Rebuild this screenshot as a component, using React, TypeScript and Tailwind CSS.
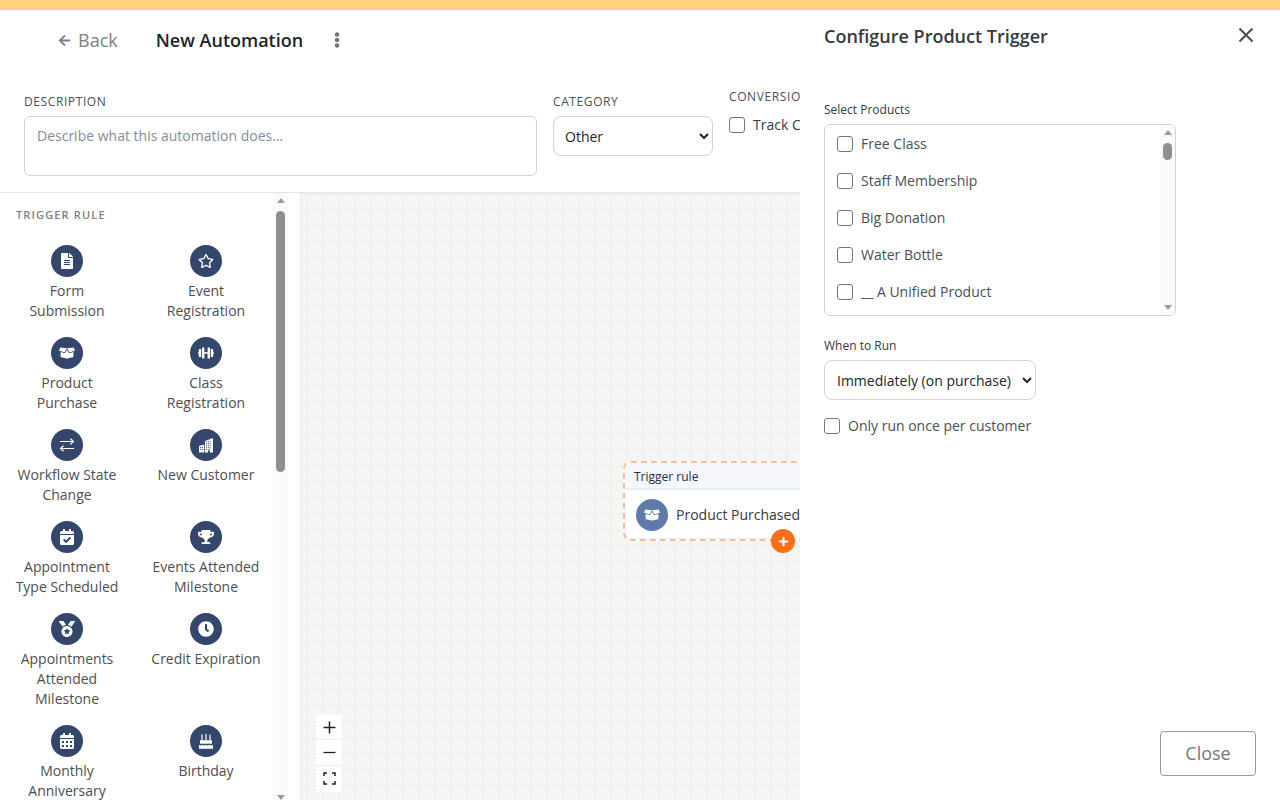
import React from "react";
import {
  FaFileAlt, FaRegStar, FaBoxOpen, FaDumbbell, FaCalendarCheck, FaTrophy, FaMedal, FaClock, FaCalendarAlt, FaPlus, FaArrowLeft, FaEllipsisV,
} from "react-icons/fa";

function ExchangeThin({ className }: { className?: string }) {
  return (
    <svg className={className} viewBox="0 0 16 16" fill="none" stroke="#fff" strokeWidth="1.2">
      <path d="M1 4.5h13.5M11.5 1.8l3 2.7-3 2.7" />
      <path d="M15 11.5H1.5M4.5 8.8l-3 2.7 3 2.7" />
    </svg>
  );
}

function Buildings({ className }: { className?: string }) {
  const towerDots: React.ReactNode[] = [];
  for (let r = 0; r < 5; r++) {
    for (let c = 0; c < 3; c++) {
      towerDots.push(<rect key={`t${r}${c}`} x={8.2 + c * 1.7} y={4.2 + r * 1.9} width="0.9" height="1" fill="#34466b" />);
    }
  }
  const lowDots: React.ReactNode[] = [];
  for (let r = 0; r < 2; r++) {
    for (let c = 0; c < 2; c++) {
      lowDots.push(<rect key={`l${r}${c}`} x={2.2 + c * 1.9} y={10 + r * 2} width="1" height="1" fill="#34466b" />);
    }
  }
  return (
    <svg className={className} viewBox="0 0 16 16">
      <path d="M7 15.5V4L15 1v14.5h-3v-2h-2v2z" fill="#fff" />
      <path d="M1 15.5V9l5.2-1.6v8.1z" fill="#fff" />
      {towerDots}
      {lowDots}
    </svg>
  );
}

function Cake({ className }: { className?: string }) {
  return (
    <svg className={className} viewBox="0 0 16 16" fill="#fff">
      <rect x="3.4" y="1.5" width="1.2" height="6" />
      <rect x="7.4" y="0.8" width="1.2" height="6.7" />
      <rect x="11.4" y="1.5" width="1.2" height="6" />
      <path d="M2 7.2h12v3.1c-1 .9-2 .9-3 0-1 .9-2 .9-3 0-1 .9-2 .9-3 0-1 .9-2 .9-3 0z" />
      <path d="M1 11.8c1.2.9 2.4.9 3.5 0 1.1.9 2.3.9 3.5 0 1.100.9 2.300.9 3.500 0 1.100.9 2.300.9 3.500 0V15.800H1z" />
    </svg>
  );
}

const triggers: { label: string; Icon: React.ComponentType<{ className?: string }> }[] = [
  { label: "Form Submission", Icon: FaFileAlt },
  { label: "Event Registration", Icon: FaRegStar },
  { label: "Product Purchase", Icon: FaBoxOpen },
  { label: "Class Registration", Icon: FaDumbbell },
  { label: "Workflow State Change", Icon: ExchangeThin },
  { label: "New Customer", Icon: Buildings },
  { label: "Appointment Type Scheduled", Icon: FaCalendarCheck },
  { label: "Events Attended Milestone", Icon: FaTrophy },
  { label: "Appointments Attended Milestone", Icon: FaMedal },
  { label: "Credit Expiration", Icon: FaClock },
  { label: "Monthly Anniversary", Icon: FaCalendarAlt },
  { label: "Birthday", Icon: Cake },
];

const products = ["Free Class", "Staff Membership", "Big Donation", "Water Bottle", "__ A Unified Product"];

function Check({ className = "" }: { className?: string }) {
  return <input type="checkbox" className={"appearance-none w-4 h-4 shrink-0 bg-white border border-[#767676] rounded-[3px] " + className} />;
}

function ArrowUp({ w = 8 }: { w?: number }) {
  return <svg width={w} height={5} viewBox="0 0 8 5" className="shrink-0"><path d="M4 0L8 5H0z" fill="#9a9a9a" /></svg>;
}
function ArrowDown({ w = 8 }: { w?: number }) {
  return <svg width={w} height={5} viewBox="0 0 8 5" className="shrink-0"><path d="M0 0H8L4 5z" fill="#9a9a9a" /></svg>;
}

export default function App() {
  return (
    <div className="w-[1280px] h-[800px] overflow-hidden flex flex-col bg-white text-[#495057] font-['Open_Sans',sans-serif]">
      <div className="h-[10px] shrink-0 bg-[#ffd17d]" />
      <div className="flex flex-1 min-h-0">
        <div className="w-[800px] shrink-0 flex flex-col overflow-hidden">
          <div className="h-[60px] shrink-0 flex items-center">
            <div className="ml-[58px] flex items-center text-[18px] text-[#808080]">
              <FaArrowLeft className="w-[13px] h-[13px] mr-[7px]" />
              <span>Back</span>
            </div>
            <div className="ml-[38px] text-[18px] font-[590] text-[#212529]">New Automation</div>
            <FaEllipsisV className="ml-[27px] w-[14px] h-[16px] text-[#6c757d]" />
          </div>
          <div className="h-[123px] shrink-0 border-b border-[#e5e5e5] flex pl-6 w-[900px]">
            <div className="w-[513px] shrink-0 pt-[23px]">
              <div className="text-[12px] leading-[18px] tracking-[0.6px] text-[#495057] mb-[5px]">DESCRIPTION</div>
              <div className="h-[60px] rounded-[6px] border border-[#ced4da] px-3 py-[9px] text-[14px] leading-[20px] text-[#868e96]">
                Describe what this automation does...
              </div>
            </div>
            <div className="ml-4 w-[160px] shrink-0 pt-[23px]">
              <div className="text-[12px] leading-[18px] tracking-[0.6px] text-[#495057] mb-[5px]">CATEGORY</div>
              <select defaultValue="Other" className="w-[160px] h-10 rounded-[8px] border border-[#ced4da] bg-white pl-[7px] pr-1 text-[14px] text-[#212529]">
                <option>Other</option>
              </select>
            </div>
            <div className="ml-4 shrink-0 pt-[18px]">
              <div className="text-[12px] leading-[18px] tracking-[0.6px] text-[#495057] whitespace-nowrap">CONVERSION</div>
              <div className="mt-[9px] flex items-center gap-2 text-[14px] leading-[20px] text-[#343a40] whitespace-nowrap">
                <Check />
                <span>Track Conversion</span>
              </div>
            </div>
          </div>
          <div className="flex-1 min-h-0 flex">
            <div className="w-[273px] shrink-0 overflow-hidden pt-[13px]">
              <div className="pl-4 text-[11px] leading-[18px] font-semibold tracking-[1.15px] text-[#808080]">TRIGGER RULE</div>
              <div className="mt-[21px] grid grid-cols-[110px_110px] gap-x-[29px] gap-y-4 pl-3">
                {triggers.map(({ label, Icon }) => (
                  <div key={label} className="flex flex-col items-center text-center">
                    <div className="w-8 h-8 rounded-full bg-[#34466b] flex items-center justify-center text-white">
                      <Icon className="w-4 h-4" />
                    </div>
                    <div className="mt-1 text-[14px] leading-[20px] text-[#4f4f4f]">{label}</div>
                  </div>
                ))}
              </div>
            </div>
            <div className="w-[15px] shrink-0 bg-[#fafafa] flex flex-col items-center pt-[5px]">
              <ArrowUp />
              <div className="mt-[8px] w-[9px] h-[261px] rounded-full bg-[#8f8f8f]" />
              <div className="mt-auto mb-0">
                <ArrowDown />
              </div>
            </div>
            <div className="w-[12px] shrink-0" />
            <div className="relative flex-1 border-l border-[#e8e8e8] bg-[#f5f5f4] bg-[linear-gradient(#efefee_2px,transparent_2px),linear-gradient(90deg,#efefee_2px,transparent_2px)] bg-[size:16px_16px] bg-[position:5px_0px]">
              <div className="absolute left-[322px] top-[268px] w-[240px] h-[80px] rounded-[8px] border-2 border-dashed border-[#f5bd9c] bg-white shadow-[inset_0_0_0_1px_#eef1fa]">
                <div className="h-[27px] bg-[#f5f7fd] border-b-2 border-[#e7ecf9] rounded-t-[6px] pl-[9px] text-[12px] leading-[27px] text-[#1f2a44]">
                  Trigger rule
                </div>
                <div className="flex items-center pl-[11px] pt-[9px]">
                  <div className="w-8 h-8 rounded-full bg-[#5f7aa8] flex items-center justify-center text-white">
                    <FaBoxOpen className="w-4 h-4" />
                  </div>
                  <div className="ml-2 text-[14px] leading-[20px] text-[#343a40] whitespace-nowrap">Product Purchased</div>
                </div>
              </div>
              <div className="absolute left-[470px] top-[336px] w-6 h-6 rounded-full bg-[#f96f16] flex items-center justify-center text-white">
                <FaPlus className="w-[11px] h-[11px]" />
              </div>
              <div className="absolute left-[15px] top-[521px] w-[26px] bg-white flex flex-col text-[#222]">
                <div className="h-[26px] flex items-center justify-center border-b border-[#eee] pt-px">
                  <svg width="13" height="13" viewBox="0 0 13 13"><path d="M6.5 0.500v12M0.500 6.500h12" stroke="#222" strokeWidth="1.5" /></svg>
                </div>
                <div className="h-[26px] flex items-center justify-center border-b border-[#eee]">
                  <svg width="13" height="13" viewBox="0 0 13 13"><path d="M0.500 6.500h12" stroke="#222" strokeWidth="1.3" /></svg>
                </div>
                <div className="h-[26px] flex items-center justify-center pb-[2px]">
                  <svg width="13" height="13" viewBox="0 0 13 13" fill="none"><path d="M1 4V1h3M9 1h3v3M12 9v3H9M4 12H1V9" stroke="#222" strokeWidth="1.5" /></svg>
                </div>
              </div>
            </div>
          </div>
        </div>

        <div className="relative w-[480px] shrink-0 bg-white flex flex-col pl-6">
          <div className="absolute left-[438px] top-[17px]">
            <svg width="16" height="16" viewBox="0 0 16 16"><path d="M1.500 1.500l13 13M14.500 1.500l-13 13" stroke="#4d4d4d" strokeWidth="2" /></svg>
          </div>
          <h2 className="mt-[12px] text-[18px] leading-[28px] font-semibold text-[#343a40]">Configure Product Trigger</h2>
          <div className="mt-[51px] text-[12px] leading-[18px] text-[#343a40]">Select Products</div>
          <div className="mt-[5px] w-[352px] h-[192px] rounded-[6px] border border-[#ced4da] flex overflow-hidden">
            <div className="flex-1 flex flex-col gap-[17px] pl-3 pt-[9px]">
              {products.map((p) => (
                <div key={p} className="flex items-center gap-2 h-5 text-[14px] leading-[20px] text-[#495057]">
                  <Check />
                  <span>{p}</span>
                </div>
              ))}
            </div>
            <div className="w-[15px] shrink-0 bg-[#fafafa] flex flex-col items-center pt-[5px] pb-[5px]">
              <ArrowUp />
              <div className="mt-[8px] w-[9px] h-[17px] rounded-full bg-[#8f8f8f]" />
              <div className="mt-auto">
                <ArrowDown />
              </div>
            </div>
          </div>
          <div className="mt-[21px] text-[12px] leading-[18px] text-[#343a40]">When to Run</div>
          <select defaultValue="Immediately (on purchase)" className="mt-[5px] w-[212px] h-10 rounded-[8px] border border-[#ced4da] bg-white pl-2 pr-1 text-[14px] text-[#212529]">
            <option>Immediately (on purchase)</option>
          </select>
          <div className="mt-4 flex items-center gap-2 text-[14px] leading-[20px] text-[#495057]">
            <Check />
            <span>Only run once per customer</span>
          </div>
          <div className="mt-auto mb-6 mr-6 self-end w-24 h-[45px] rounded-[4px] border border-[#999] flex items-center justify-center text-[18px] text-[#777]">
            Close
          </div>
        </div>
      </div>
    </div>
  );
}
